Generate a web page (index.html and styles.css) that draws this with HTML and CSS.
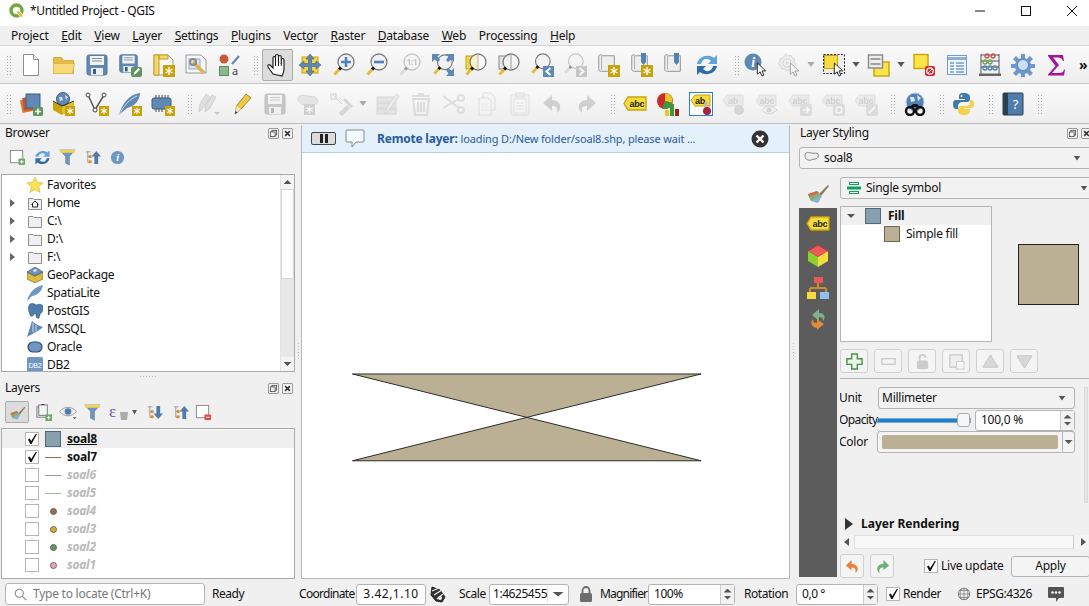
FILE: index.html
```html
<!DOCTYPE html>
<html lang="en">
<head>
	<meta charset="UTF-8">
	<title>*Untitled Project - QGIS</title>
	<link rel="stylesheet" href="styles.css">
</head>
<body>
	<svg class="defs" width="0" height="0">
		<symbol id="star" viewBox="0 0 12 12"><rect width="12" height="12" fill="#c9a20a"/><path d="M6 2v8M2.5 4l7 4M9.500 4l-7 4" stroke="#fff" stroke-width="1.300"/></symbol>
		<symbol id="logo" viewBox="0 0 16 16"><circle cx="7.500" cy="7.500" r="5.500" fill="none" stroke="#6fa83d" stroke-width="3.400"/><path d="M7 7l3 0 5 6-3 2-5-6z" fill="#fff"/><path d="M8.500 8.500l4.500 5" stroke="#f0b429" stroke-width="2.200"/></symbol>
		<symbol id="new" viewBox="0 0 24 24"><path d="M4.500 1.500h10l5 5v16h-15z" fill="#fff" stroke="#8d8d8d"/><path d="M14.500 1.500v5h5" fill="#eee" stroke="#8d8d8d"/></symbol>
		<symbol id="open" viewBox="0 0 24 24"><path d="M1.500 4.500h8l2 3h10v13h-20z" fill="#e8bb4a" stroke="#d9ad3d"/><path d="M1.500 10.500h21l-2 10h-19z" fill="#f8da78" stroke="#e0b84c"/></symbol>
		<symbol id="save" viewBox="0 0 24 24"><rect x="2" y="2" width="20" height="20" rx="2" fill="#5f88b3" stroke="#4f739b"/><rect x="5" y="3" width="14" height="9" fill="#f2f2f2"/><path d="M7 5.500h10M7 8h10" stroke="#8a8a8a"/><rect x="6" y="15" width="12" height="7" fill="#eee"/><rect x="8" y="16" width="3" height="5" fill="#3f5f82"/></symbol>
		<symbol id="saveas" viewBox="0 0 24 24"><use href="#save" width="21" height="21"/><rect x="13" y="14" width="11" height="10" rx="2" fill="#5c9561"/><path d="M15.500 22l1-3 4-4 1.500 1.500-4 4z" fill="#fff"/></symbol>
		<symbol id="layout" viewBox="0 0 24 24"><path d="M3 2h14l5 5v15H3z" fill="#f6f6f6" stroke="#999"/><path d="M3 2h5v20H3zM8 2h9v4H8z" fill="#f2d675" stroke="#c9a20a"/><use href="#star" x="12" y="12" width="12" height="12"/></symbol>
		<symbol id="manager" viewBox="0 0 24 24"><path d="M2 2h15l5 5v13H2z" fill="#f8f8f8" stroke="#999"/><rect x="5" y="6" width="11" height="10" fill="#dbe7f4" stroke="#8ba9c9"/><path d="M9 9l11 11" stroke="#d9b44a" stroke-width="3.500"/><circle cx="9" cy="9" r="3" fill="none" stroke="#8a8a8a" stroke-width="2"/></symbol>
		<symbol id="hand" viewBox="0 0 24 24"><path d="M7 21l-5-7c-1-2 1-3 2-2l3 3V5c0-2 2.500-2 2.500 0v5-7c0-2 3-2 3 0v7-6c0-2 2.800-2 2.800 0v7-4c0-2 2.700-2 2.700 0v9c0 3-1 5-2 7z" fill="#fff" stroke="#222" stroke-width="1.200"/><path d="M9.500 10v3M12.500 10v3M15.300 10v3" stroke="#222"/></symbol>
		<symbol id="pansel" viewBox="0 0 24 24"><rect x="4" y="4" width="16" height="16" fill="#f3d44d" stroke="#c9a20a"/><path d="M12 1l4 5h-2.500v4.500H18V8l5 4-5 4v-2.500h-4.500V18H16l-4 5-4-5h2.500v-4.500H6V16l-5-4 5-4v2.500h4.500V6H8z" fill="#5f88b3" stroke="#3f5f82" stroke-width=".6"/></symbol>
		<symbol id="mag" viewBox="0 0 24 24"><circle cx="14" cy="9" r="8" fill="#f1f1f1" stroke="#7a7a7a" stroke-width="1.300"/><path d="M8.500 15L2.500 21.500" stroke="#e7b93a" stroke-width="3"/><path d="M9 14.500l-1.800 2" stroke="#111" stroke-width="3"/></symbol>
		<symbol id="zin" viewBox="0 0 24 24"><use href="#mag" width="24" height="24"/><path d="M14 4v10M9 9h10" stroke="#4f82b6" stroke-width="2.600"/></symbol>
		<symbol id="zout" viewBox="0 0 24 24"><use href="#mag" width="24" height="24"/><path d="M9 9h10" stroke="#4f82b6" stroke-width="2.600"/></symbol>
		<symbol id="zfull" viewBox="0 0 24 24"><use href="#mag" x="1" y="1" width="22" height="22"/><path d="M1 1h8L6.500 3.500 9 7 7 9 3.500 6.500 1 9zM23 1v8l-2.500-2.500L17 9l-2-2 2.500-3.500L15 1zM23 23h-8l2.500-2.500L15 17l2-2 3.500 2.500L23 15z" fill="#5f88b3"/></symbol>
		<symbol id="zsel" viewBox="0 0 24 24"><rect x="2" y="3" width="12" height="13" fill="#f3d44d" stroke="#c9a20a"/><circle cx="14" cy="9" r="8" fill="#fff" fill-opacity=".7" stroke="#7a7a7a" stroke-width="1.300"/><path d="M14 1v16" stroke="#bbb"/><path d="M8.500 15L2.500 21.500" stroke="#e7b93a" stroke-width="3"/><path d="M9 14.500l-1.800 2" stroke="#111" stroke-width="3"/></symbol>
		<symbol id="zlayer" viewBox="0 0 24 24"><rect x="2" y="3" width="12" height="13" fill="#e6e6e6" stroke="#888"/><circle cx="14" cy="9" r="8" fill="#f4f4f4" fill-opacity=".8" stroke="#7a7a7a" stroke-width="1.300"/><path d="M14 1v16" stroke="#aaa"/><path d="M8.500 15L2.500 21.500" stroke="#e7b93a" stroke-width="3"/><path d="M9 14.500l-1.800 2" stroke="#111" stroke-width="3"/></symbol>
		<symbol id="zlast" viewBox="0 0 24 24"><use href="#mag" width="22" height="22"/><rect x="13" y="13" width="11" height="11" fill="#5f88b3"/><path d="M20.500 15l-4 3.500 4 3.500" fill="none" stroke="#fff" stroke-width="2"/></symbol>
		<symbol id="znext" viewBox="0 0 24 24"><use href="#mag" width="22" height="22"/><rect x="13" y="13" width="11" height="11" fill="#5f88b3"/><path d="M16.500 15l4 3.500-4 3.500" fill="none" stroke="#fff" stroke-width="2"/></symbol>
		<symbol id="map" viewBox="0 0 24 24"><path d="M3 3c2-2 3-1 4 0h13v17H6c-2 0-3-1-3-2z" fill="#eee" stroke="#8d8d8d"/><path d="M6 3v15" stroke="#aaa"/></symbol>
		<symbol id="bmnew" viewBox="0 0 24 24"><use href="#map" width="22" height="22"/><use href="#star" x="12" y="12" width="12" height="12"/></symbol>
		<symbol id="bmpin" viewBox="0 0 24 24"><use href="#map" width="22" height="22"/><path d="M12 0h5v9l-2.500 3-2.500-3z" fill="#4f82b6"/><use href="#star" x="12" y="12" width="12" height="12"/></symbol>
		<symbol id="bm" viewBox="0 0 24 24"><use href="#map" width="22" height="22"/><path d="M12 0h5v9l-2.500 3-2.500-3z" fill="#4f82b6"/></symbol>
		<symbol id="refresh" viewBox="0 0 24 24"><path d="M2 11C3 4 13 0 19 5l3-3v9h-9l3-3C12 4 7 6 6 11z" fill="#5ea3dc"/><path d="M22 13c-1 7-11 11-17 6l-3 3v-9h9l-3 3c4 4 9 2 10-3z" fill="#2e6da8"/></symbol>
		<symbol id="arrow" viewBox="0 0 12 16"><path d="M1 1v12l3-2.500 2 4.500 2-1-2-4.500h4z" fill="#fff" stroke="#222"/></symbol>
		<symbol id="action" viewBox="0 0 24 24"><path d="M9 1l2 2 3-1 1 3 3 1-1 3 2 2-2 3-1 3-3-.5-3 1.500-3-2-3-.5v-3L1 11l2-2-.5-3 3-1z" fill="#ddd" stroke="#aaa"/><circle cx="10" cy="10" r="4" fill="#eee" stroke="#aaa"/><path d="M9 8l3 2-3 2z" fill="#aaa"/><use href="#arrow" x="12" y="9" width="12" height="15"/></symbol>
		<symbol id="select" viewBox="0 0 24 24"><rect x="1.500" y="1.500" width="21" height="19" fill="#ececec" stroke="#222" stroke-dasharray="2 1.500"/><rect x="2.500" y="2.500" width="13" height="13" fill="#f9dc40" stroke="#c9a20a"/><use href="#arrow" x="11" y="9" width="12" height="15"/></symbol>
		<symbol id="attrsel" viewBox="0 0 24 24"><rect x="7" y="9" width="15" height="14" fill="#f9e548" stroke="#c9a20a" stroke-width="1.400"/><rect x="1.500" y="2" width="14" height="13" fill="#eee" stroke="#888" stroke-width="1.400"/><path d="M3.500 6h10M3.500 11h10" stroke="#888" stroke-width="1.400"/></symbol>
		<symbol id="desel" viewBox="0 0 24 24"><rect x="2" y="1.500" width="14" height="14" fill="#f9e548" stroke="#c9a20a" stroke-width="1.400"/><rect x="13" y="13" width="10" height="10" rx="2" fill="#d8262c"/><circle cx="18" cy="18" r="3.200" fill="none" stroke="#fff" stroke-width="1.200"/><path d="M16 20l4-4" stroke="#fff"/></symbol>
		<symbol id="table" viewBox="0 0 24 24"><rect x="2.500" y="2.500" width="19" height="19" fill="#f2f7fc" stroke="#6f9ccc"/><path d="M3 4h18v3H3z" fill="#8db1d6"/><path d="M5 10h4M11 10h8M5 13h4M11 13h8M5 16h4M11 16h8M5 19h4M11 19h8" stroke="#6f9ccc" stroke-width="1.300"/></symbol>
		<symbol id="abacus" viewBox="0 0 24 24"><path d="M3 1v20M21 1v20M3 2h18M3 8h18M3 14h18" stroke="#555" fill="none"/><rect x="1" y="20.500" width="22" height="2.500" fill="#666"/><g fill="none" stroke="#c0504d" stroke-width="1.300"><circle cx="9" cy="3" r="2"/><circle cx="15" cy="3" r="2"/></g><g fill="none" stroke="#6ea84f" stroke-width="1.300"><circle cx="7" cy="9" r="2"/><circle cx="12" cy="9" r="2"/></g><g fill="none" stroke="#4f82b6" stroke-width="1.300"><circle cx="7" cy="15" r="2"/><circle cx="12" cy="15" r="2"/><circle cx="17" cy="15" r="2"/></g></symbol>
		<symbol id="gear" viewBox="0 0 24 24"><path d="M10 1h4v4l2 1 3-3 3 3-3 3 1 2h4v4h-4l-1 2 3 3-3 3-3-3-2 1v4h-4v-4l-2-1-3 3-3-3 3-3-1-2H0v-4h4l1-2-3-3 3-3 3 3 2-1z" fill="#6d97cc"/><circle cx="12" cy="12" r="5.500" fill="#cfdff2" stroke="#5b86bb"/></symbol>
		<symbol id="sigma" viewBox="0 0 24 24"><path d="M4 2h15l1 6h-1c-1-3-3-3.500-5-3.500H9l6 7.500-7 8h7c3 0 4.500-1 5-3.500h1l-1 6H4v-1l7.500-8.500L4 3z" fill="#a3159a"/></symbol>
		<symbol id="dsm" viewBox="0 0 24 24"><rect x="2" y="7" width="13" height="13" fill="#d97a2b" transform="rotate(-12 8 13)"/><rect x="4" y="5" width="13" height="13" fill="#c7503f" transform="rotate(-8 10 11)"/><rect x="7" y="2" width="14" height="14" fill="#5f88b3" stroke="#3f5f82"/><rect x="14" y="15" width="10" height="9" rx="1.500" fill="#5c9561"/><path d="M19 16.500v6M16 19.500h6" stroke="#fff" stroke-width="1.600"/></symbol>
		<symbol id="gpkg" viewBox="0 0 24 24"><path d="M1 9l9 5v9l-9-5z" fill="#c9a20a"/><path d="M22 9l-12 5v9l12-5z" fill="#e0c12a"/><circle cx="11" cy="7" r="6.500" fill="#5f88b3" stroke="#3f5f82"/><path d="M7 5h3l1 3-3 1zM13 3l3 2-2 3z" fill="#cfdff2"/><path d="M1 9l9 5 12-5" fill="none" stroke="#333"/><use href="#star" x="13" y="14" width="10" height="10"/></symbol>
		<symbol id="vertex" viewBox="0 0 24 24"><path d="M3 3l7 15 9-15" fill="none" stroke="#555" stroke-width="1.500"/><circle cx="3" cy="3" r="2" fill="#fff" stroke="#444"/><circle cx="19" cy="3" r="2" fill="#fff" stroke="#444"/><circle cx="10" cy="18" r="2" fill="#fff" stroke="#444"/><use href="#star" x="14" y="14" width="10" height="10"/></symbol>
		<symbol id="feather" viewBox="0 0 24 24"><path d="M1 23C4 12 10 3 22 1c0 6-4 13-13 15z" fill="#5f88b3"/><path d="M1 23C6 13 12 7 19 4" fill="none" stroke="#cfdff2"/><use href="#star" x="14" y="14" width="10" height="10"/></symbol>
		<symbol id="chip" viewBox="0 0 24 24"><rect x="1" y="6" width="19" height="11" rx="2" fill="#5f88b3" stroke="#3f5f82"/><path d="M5 3v3M8 3v3M11 3v3M14 3v3M17 3v3M5 17v3M8 17v3M11 17v3" stroke="#444"/><use href="#star" x="14" y="14" width="10" height="10"/></symbol>
		<symbol id="pencils" viewBox="0 0 24 24"><path d="M2 20l1-8 6-10 4 3-6 10zM8 20l1-7 6-10 4 2-6 11z" fill="#bbb" stroke="#999"/><path d="M17 20h6l-3 3z" fill="#888"/></symbol>
		<symbol id="pencil" viewBox="0 0 24 24"><path d="M5 22l1.500-8L16 2l5 4-10 11z" fill="#eec84a" stroke="#a98a22"/><path d="M5 22l1.500-8 4.500 3z" fill="#f3e3c2"/><path d="M5 22l.5-3 2 1.500z" fill="#333"/></symbol>
		<symbol id="digit" viewBox="0 0 24 24"><path d="M4 3l9 9" stroke="#999" fill="none"/><rect x="2" y="2" width="5" height="5" fill="none" stroke="#999"/><path d="M10 21l8-8 3 3-8 8z" fill="#aaa"/><path d="M15 7l8 8" stroke="#aaa" stroke-width="3"/></symbol>
		<symbol id="blob" viewBox="0 0 24 24"><path d="M2 6c2-4 7-3 10-2s7-1 9 3-1 5-4 6-6 1-9 0-7-3-6-7z" fill="#ccc" stroke="#aaa"/></symbol>
		<symbol id="blobstar" viewBox="0 0 24 24"><use href="#blob" width="24" height="24"/><use href="#star" x="8" y="12" width="11" height="11"/></symbol>
		<symbol id="editattr" viewBox="0 0 24 24"><rect x="1" y="5" width="19" height="5" fill="#ccc" stroke="#aaa"/><rect x="1" y="11" width="19" height="5" fill="#ccc" stroke="#aaa"/><rect x="1" y="17" width="19" height="5" fill="#ccc" stroke="#aaa"/><path d="M9 22l2-7 9-13 3 2-9 13z" fill="#ddd" stroke="#aaa"/></symbol>
		<symbol id="trash" viewBox="0 0 24 24"><path d="M4 7h16l-2 16H6z" fill="none" stroke="#c4b4b4" stroke-width="2"/><path d="M3 4h18M9 2h6M9 10v10M12 10v10M15 10v10" stroke="#c4b4b4" stroke-width="2"/></symbol>
		<symbol id="cut" viewBox="0 0 24 24"><path d="M1 4l16 12M1 16L17 7" stroke="#bbb" stroke-width="2"/><circle cx="19" cy="18" r="3" fill="none" stroke="#bbb" stroke-width="2"/><circle cx="19" cy="6" r="3" fill="none" stroke="#bbb" stroke-width="2"/></symbol>
		<symbol id="copy" viewBox="0 0 24 24"><path d="M8 1h8l4 4v13H8z" fill="#f2f2f2" stroke="#bbb"/><path d="M4 6h9l3 3v14H4z" fill="#f7f7f7" stroke="#bbb"/><path d="M6 12h8M6 15h8M6 18h8" stroke="#ccc"/></symbol>
		<symbol id="paste" viewBox="0 0 24 24"><rect x="3" y="3" width="18" height="20" rx="1" fill="#eee" stroke="#bbb"/><rect x="8" y="1" width="8" height="4" fill="#ddd" stroke="#bbb"/><rect x="6" y="7" width="12" height="14" fill="#f8f8f8" stroke="#ccc"/><path d="M8 11h8M8 14h8M8 17h8" stroke="#ccc"/></symbol>
		<symbol id="undo" viewBox="0 0 24 24"><path d="M11 3L2 11l9 8v-5c4 0 6 1 5 7 5-4 5-12-5-13z" fill="#999"/></symbol>
		<symbol id="redo" viewBox="0 0 24 24"><path d="M13 3l9 8-9 8v-5c-4 0-6 1-5 7-5-4-5-12 5-13z" fill="#999"/></symbol>
		<symbol id="diagram" viewBox="0 0 24 24"><circle cx="9" cy="9" r="8" fill="#cc2b2b"/><path d="M9 9V1a8 8 0 0 1 7.500 10z" fill="#e8c52a"/><path d="M9 9l7.500 2A8 8 0 0 1 6 16.500z" fill="#3a9a3a"/><rect x="9" y="18" width="4" height="6" fill="#e8c52a"/><rect x="14" y="12" width="4" height="12" fill="#3a9a3a"/><rect x="19" y="17" width="4" height="7" fill="#a02020"/></symbol>
		<symbol id="search" viewBox="0 0 24 24"><circle cx="12" cy="10" r="9" fill="#4f82b6" stroke="#bcd"/><path d="M7 5h4l1 4-4 1zM14 3l4 3-3 3z" fill="#dfe9f4"/><circle cx="7" cy="19" r="4" fill="none" stroke="#111" stroke-width="2.500"/><circle cx="17" cy="19" r="4" fill="none" stroke="#111" stroke-width="2.500"/><path d="M7 15l3-3h4l3 3" fill="#111"/></symbol>
		<symbol id="python" viewBox="0 0 24 24"><path d="M12 1C7 1 7 3 7 5v2h6v1H4c-3 0-3 3-3 5s1 4 3 4h2v-3c0-2 2-4 4-4h5c2 0 3-1 3-3V5c0-2-2-4-6-4z" fill="#3f7cad"/><circle cx="9.500" cy="4" r="1" fill="#fff"/><path d="M18 8v3c0 2-2 3-4 3H9c-2 0-3 1-3 3v2c0 2 2 4 6 4s6-2 6-4v-2h-6v-1h7c3 0 3-3 3-5s-1-3-3-3z" fill="#f5d04c"/></symbol>
		<symbol id="undock" viewBox="0 0 14 14"><rect x=".5" y=".5" width="13" height="13" rx="2" fill="#f4f4f4" stroke="#777"/><rect x="5" y="3" width="6" height="6" fill="none" stroke="#444"/><rect x="3" y="5" width="6" height="6" fill="#f4f4f4" stroke="#444"/></symbol>
		<symbol id="close" viewBox="0 0 14 14"><rect x=".5" y=".5" width="13" height="13" rx="2" fill="#f4f4f4" stroke="#777"/><path d="M4 4l6 6M10 4l-6 6" stroke="#333" stroke-width="2"/></symbol>
		<symbol id="addgroup" viewBox="0 0 18 18"><rect x="1.500" y="1.500" width="13" height="13" fill="#fff" stroke="#888"/><rect x="10" y="10" width="7" height="7" rx="1" fill="#6fa868"/><path d="M13.500 11.500v4M11.500 13.500h4" stroke="#fff"/></symbol>
		<symbol id="funnel" viewBox="0 0 18 18"><path d="M1 1h16l-6 7v9l-4-2V8z" fill="#6f97c2" stroke="#4f739b" stroke-width=".6"/><rect x="1" y="1" width="16" height="3" fill="#f3d44d"/></symbol>
		<symbol id="expand" viewBox="0 0 18 18"><path d="M2 3h5M4 3v11h3M4 8h3" fill="none" stroke="#999"/><rect x="5" y="6.500" width="3" height="3" fill="#e08a2b"/><rect x="5" y="12" width="3" height="3" fill="#e08a2b"/><path d="M13 2l5 6h-3v8h-4V8H8z" fill="#4f7cab"/></symbol>
		<symbol id="collapse" viewBox="0 0 18 18"><path d="M2 3h5M4 3v11h3M4 8h3" fill="none" stroke="#999"/><rect x="5" y="6.500" width="3" height="3" fill="#e08a2b"/><rect x="5" y="12" width="3" height="3" fill="#e08a2b"/><path d="M13 16l5-6h-3V2h-4v8H8z" fill="#4f7cab"/></symbol>
		<symbol id="brush" viewBox="0 0 24 24"><path d="M13 13l9-9 1 1-8 10z" fill="#8a7a55"/><path d="M2 13l9-3 5 5-4 7-7-2z" fill="#8cb0c9"/><path d="M2 13l9-3 2 2-10 4z" fill="#d9664a"/><path d="M3 16l10-4 1 2-9 6z" fill="#7fb36f"/></symbol>
		<symbol id="addlayer" viewBox="0 0 18 18"><rect x="2" y="3" width="10" height="11" fill="#eee" stroke="#777"/><rect x="4" y="1" width="9" height="11" fill="#f4f4f4" stroke="#777"/><path d="M7 1V0h3v1" stroke="#777"/><rect x="11" y="11" width="7" height="7" fill="#6fa868"/><path d="M14.500 12.500v4M12.500 14.500h4" stroke="#fff"/></symbol>
		<symbol id="eye" viewBox="0 0 20 18"><path d="M1 8c5-6 13-6 18 0-5 6-13 6-18 0z" fill="#eee" stroke="#999"/><circle cx="10" cy="8" r="3.500" fill="#4f7cab"/><path d="M15 14h4l-2 2z" fill="#444"/></symbol>
		<symbol id="bin" viewBox="0 0 10 10"><path d="M1 2h8L8 10H2z" fill="#aaa"/></symbol>
		<symbol id="remove" viewBox="0 0 18 18"><rect x="1.500" y="1.500" width="13" height="13" fill="#fff" stroke="#888"/><rect x="10" y="11" width="7" height="6" rx="1" fill="#e2474a"/><path d="M11.500 14h4" stroke="#fff"/></symbol>
		<symbol id="folder" viewBox="0 0 16 16"><path d="M1.500 3.500v11h13v-10H7l-1-1z" fill="#f0f0f0" stroke="#8d8d8d"/></symbol>
		<symbol id="home" viewBox="0 0 16 16"><use href="#folder" width="16" height="16"/><path d="M4.500 9.500L8 6l3.500 3.500M5.500 9v3h5V9" fill="#fff" stroke="#222"/></symbol>
		<symbol id="favstar" viewBox="0 0 16 16"><path d="M8 0l2.300 5.400 5.700.5-4.300 3.800 1.300 5.800L8 12.400l-5 3.100 1.300-5.800L0 5.900l5.700-.5z" fill="#f9e354" stroke="#d8b83a" stroke-width=".7"/></symbol>
		<symbol id="gpkgsm" viewBox="0 0 16 16"><path d="M0 5l8 4 8-4v7l-8 4-8-4z" fill="#dcbc3c" stroke="#555" stroke-width=".6"/><path d="M0 5l8-5 8 5-8 4z" fill="#7094bd" stroke="#444" stroke-width=".6"/><path d="M6 3l3-1 1 2-3 1z" fill="#dfe9f4"/></symbol>
		<symbol id="feathersm" viewBox="0 0 16 16"><path d="M0 16C2 8 7 2 16 0c-1 5-4 10-11 11z" fill="#6f97c2"/></symbol>
		<symbol id="pg" viewBox="0 0 16 16"><path d="M3 1c3-1 5 0 6 1 2-1 6-1 7 1s0 6-3 8c0 3-1 5-3 4-1 0-1-3-1-4H7c-1 3-3 3-4 1-1-3-3-8 0-11z" fill="#4f7cab" stroke="#2c4f73" stroke-width=".5"/></symbol>
		<symbol id="mssql" viewBox="0 0 16 16"><path d="M0 16L5 0c3 3 7 5 11 6-3 3-9 6-16 10z" fill="#5f88b3"/><path d="M6 2v9M9 4v6" stroke="#cfdff2"/></symbol>
		<symbol id="oracle" viewBox="0 0 16 16"><rect x="1" y="3" width="14" height="10" rx="5" fill="#6f97c2" stroke="#2c4f73" stroke-width="1.200"/></symbol>
		<symbol id="bubble" viewBox="0 0 20 20"><path d="M2 1h16a1 1 0 0 1 1 1v10a1 1 0 0 1-1 1h-7l-4 5v-5H2a1 1 0 0 1-1-1V2a1 1 0 0 1 1-1z" fill="#f4f9fd" stroke="#888"/></symbol>
		<symbol id="xcircle" viewBox="0 0 18 18"><circle cx="9" cy="9" r="8.500" fill="#333"/><path d="M5.500 5.500l7 7M12.500 5.500l-7 7" stroke="#fff" stroke-width="2.400"/></symbol>
		<symbol id="polygon" viewBox="0 0 16 16"><path d="M1 5c0-3 3-3 6-2s6-1 7 1 0 5-3 5-4 2-7 1-3-3-3-5z" fill="#eee" stroke="#888"/></symbol>
		<symbol id="single" viewBox="0 0 14 14"><path d="M2 1h10v3H2zM0 5.500h14v3H0zM2 10h10v3H2z" fill="#0f9d58"/><path d="M3 2.500h8M3 11.500h8" stroke="#fff"/></symbol>
		<symbol id="cube" viewBox="0 0 24 24"><path d="M12 1l10 6-10 6L2 7z" fill="#ee5a5a" stroke="#b33"/><path d="M2 7l10 6v10L2 17z" fill="#8ccf2e"/><path d="M22 7l-10 6v10l10-6z" fill="#f6dc3c"/></symbol>
		<symbol id="tree" viewBox="0 0 24 24"><rect x="8" y="1" width="9" height="6" fill="#e85a5a"/><path d="M12 7v5M4 12h16M4 12v4M20 12v4" stroke="#d08a2b" stroke-width="2" fill="none"/><rect x="1" y="16" width="9" height="7" fill="#f6dc3c"/><rect x="14" y="16" width="9" height="7" fill="#8fc0ef"/></symbol>
		<symbol id="hist" viewBox="0 0 24 24"><path d="M13 1l-7 6 7 6V9c3 0 4 1 4 4 3-3 2-8-4-8z" fill="#7fb08a"/><path d="M11 22l7-6-7-5v4c-3 0-4-1-4-4-3 3-2 8 4 9z" fill="#e08a3c"/></symbol>
		<symbol id="plus" viewBox="0 0 18 18"><path d="M6 1h6v5h5v6h-5v5H6v-5H1V6h5z" fill="#e9f5e6" stroke="#4f8f4f" stroke-width="1.500"/></symbol>
		<symbol id="minus" viewBox="0 0 18 18"><rect x="2" y="6" width="14" height="6" fill="#f4f4f4" stroke="#ccc" stroke-width="1.500"/></symbol>
		<symbol id="lock" viewBox="0 0 18 18"><rect x="3" y="8" width="12" height="9" rx="2" fill="#ccc"/><path d="M6 8V5a3 3 0 0 1 6 0" fill="none" stroke="#ccc" stroke-width="2"/></symbol>
		<symbol id="dup" viewBox="0 0 18 18"><rect x="2" y="2" width="13" height="13" fill="#eee" stroke="#bbb"/><rect x="9" y="9" width="8" height="8" fill="#f8f8f8" stroke="#ccc"/></symbol>
		<symbol id="up" viewBox="0 0 18 18"><path d="M9 2l8 13H1z" fill="#d8d8d8" stroke="#c4c4c4"/></symbol>
		<symbol id="down" viewBox="0 0 18 18"><path d="M9 16L1 3h16z" fill="#d8d8d8" stroke="#c4c4c4"/></symbol>
		<symbol id="undoc" viewBox="0 0 18 18"><path d="M8 2L2 8l6 5V10c3 0 5 1 4 6 4-3 4-9-4-10z" fill="#e8813a"/></symbol>
		<symbol id="redoc" viewBox="0 0 18 18"><path d="M10 2l6 6-6 5V10c-3 0-5 1-4 6-4-3-4-9 4-10z" fill="#6fb07a"/></symbol>
		<symbol id="mouse" viewBox="0 0 18 18"><path d="M3 2l8 3 5 7-3 5-6-1-5-6z" fill="#333" stroke="#222"/><path d="M3 6l7-3M5 10l8-5M8 14l6-5" stroke="#eee" stroke-width="1.200"/><circle cx="11" cy="13" r="2" fill="#eee"/></symbol>
		<symbol id="padlock" viewBox="0 0 14 16"><rect x="1" y="7" width="12" height="9" rx="1.500" fill="#6c6c6c"/><path d="M3.500 7V4.500a3.500 3.500 0 0 1 7 0V7" fill="none" stroke="#6c6c6c" stroke-width="1.800"/></symbol>
		<symbol id="globe" viewBox="0 0 16 16"><circle cx="8" cy="8" r="6.500" fill="#eee" stroke="#666"/><path d="M1.500 8h13M8 1.500v13M3 4h10M3 12h10M5 2c-2 4-2 8 0 12M11 2c2 4 2 8 0 12" fill="none" stroke="#666" stroke-width=".7"/></symbol>
		<symbol id="msg" viewBox="0 0 18 18"><path d="M2 2h14a1 1 0 0 1 1 1v9a1 1 0 0 1-1 1h-4l-3 4v-4H2a1 1 0 0 1-1-1V3a1 1 0 0 1 1-1z" fill="#555"/><circle cx="5.500" cy="7.500" r="1.200" fill="#fff"/><circle cx="9" cy="7.500" r="1.200" fill="#fff"/><circle cx="12.500" cy="7.500" r="1.200" fill="#fff"/></symbol>
		<symbol id="glass" viewBox="0 0 16 16"><circle cx="6.500" cy="6.500" r="5" fill="none" stroke="#888" stroke-width="1.300"/><path d="M10 10l5 5" stroke="#888" stroke-width="1.500"/></symbol>
	</svg>

	<div class="app">
		<header class="titlebar">
			<svg class="app-logo"><use href="#logo"/></svg>
			<span class="app-title">*Untitled Project - QGIS</span>
			<div class="winbtns">
				<svg class="winbtn" viewBox="0 0 12 12"><path d="M1 6h10" stroke="#111"/></svg>
				<svg class="winbtn" viewBox="0 0 12 12"><rect x="1.500" y="1.500" width="9" height="9" fill="none" stroke="#111"/></svg>
				<svg class="winbtn" viewBox="0 0 12 12"><path d="M1 1l10 10M11 1L1 11" stroke="#111"/></svg>
			</div>
		</header>

		<nav class="menubar">
			<span>Pro<u>j</u>ect</span>
			<span><u>E</u>dit</span>
			<span><u>V</u>iew</span>
			<span><u>L</u>ayer</span>
			<span><u>S</u>ettings</span>
			<span><u>P</u>lugins</span>
			<span>Vect<u>o</u>r</span>
			<span><u>R</u>aster</span>
			<span><u>D</u>atabase</span>
			<span><u>W</u>eb</span>
			<span>Pro<u>c</u>essing</span>
			<span><u>H</u>elp</span>
		</nav>

		<div class="toolbar">
			<i class="grip first"></i>
			<span class="tool"><svg class="ic"><use href="#new"/></svg></span>
			<span class="tool"><svg class="ic"><use href="#open"/></svg></span>
			<span class="tool"><svg class="ic"><use href="#save"/></svg></span>
			<span class="tool"><svg class="ic"><use href="#saveas"/></svg></span>
			<span class="tool"><svg class="ic"><use href="#layout"/></svg></span>
			<span class="tool"><svg class="ic"><use href="#manager"/></svg></span>
			<span class="tool">
				<svg class="ic" viewBox="0 0 24 24"><circle cx="7" cy="6" r="4.500" fill="#c75b39"/><path d="M15 11l7-8" stroke="#5f88b3" stroke-width="2"/><rect x="2.500" y="13.500" width="9" height="9" fill="#8cb78f" stroke="#5c8f60"/><text x="15" y="22" font-family="Noto Sans" font-size="11" fill="#444">a</text></svg>
			</span>
			<i class="grip pan"></i>
			<span class="tool active"><svg class="ic"><use href="#hand"/></svg></span>
			<span class="tool"><svg class="ic"><use href="#pansel"/></svg></span>
			<span class="tool nudge-sm"><svg class="ic"><use href="#zin"/></svg></span>
			<span class="tool"><svg class="ic"><use href="#zout"/></svg></span>
			<span class="tool off">
				<svg class="ic" viewBox="0 0 24 24"><use href="#mag" width="24" height="24"/><text x="14" y="12" text-anchor="middle" font-family="Noto Sans" font-weight="700" font-size="8" fill="#777">1:1</text></svg>
			</span>
			<span class="tool"><svg class="ic"><use href="#zfull"/></svg></span>
			<span class="tool"><svg class="ic"><use href="#zsel"/></svg></span>
			<span class="tool"><svg class="ic"><use href="#zlayer"/></svg></span>
			<span class="tool"><svg class="ic"><use href="#zlast"/></svg></span>
			<span class="tool off"><svg class="ic"><use href="#znext"/></svg></span>
			<span class="tool"><svg class="ic"><use href="#bmnew"/></svg></span>
			<span class="tool"><svg class="ic"><use href="#bmpin"/></svg></span>
			<span class="tool"><svg class="ic"><use href="#bm"/></svg></span>
			<span class="tool"><svg class="ic"><use href="#refresh"/></svg></span>
			<i class="grip wide"></i>
			<span class="tool">
				<svg class="ic" viewBox="0 0 24 24"><circle cx="9" cy="9" r="8.500" fill="#5f88b3"/><text x="9" y="14" text-anchor="middle" font-family="Liberation Serif" font-style="italic" font-weight="700" font-size="14" fill="#fff">i</text><use href="#arrow" x="12" y="9" width="12" height="15"/></svg>
			</span>
			<span class="tool off"><svg class="ic"><use href="#action"/></svg></span>
			<i class="drop off"></i>
			<span class="tool"><svg class="ic"><use href="#select"/></svg></span>
			<i class="drop"></i>
			<span class="tool"><svg class="ic"><use href="#attrsel"/></svg></span>
			<i class="drop"></i>
			<span class="tool"><svg class="ic"><use href="#desel"/></svg></span>
			<span class="tool"><svg class="ic"><use href="#table"/></svg></span>
			<span class="tool"><svg class="ic"><use href="#abacus"/></svg></span>
			<span class="tool"><svg class="ic"><use href="#gear"/></svg></span>
			<span class="tool"><svg class="ic"><use href="#sigma"/></svg></span>
			<span class="more">&raquo;</span>
		</div>

		<div class="toolbar second">
			<i class="grip first"></i>
			<span class="tool"><svg class="ic"><use href="#dsm"/></svg></span>
			<span class="tool"><svg class="ic"><use href="#gpkg"/></svg></span>
			<span class="tool"><svg class="ic"><use href="#vertex"/></svg></span>
			<span class="tool"><svg class="ic"><use href="#feather"/></svg></span>
			<span class="tool"><svg class="ic"><use href="#chip"/></svg></span>
			<i class="grip tight"></i>
			<span class="tool off"><svg class="ic"><use href="#pencils"/></svg></span>
			<span class="tool"><svg class="ic"><use href="#pencil"/></svg></span>
			<span class="tool off"><svg class="ic"><use href="#save"/></svg></span>
			<span class="tool off"><svg class="ic"><use href="#blobstar"/></svg></span>
			<span class="tool off"><svg class="ic"><use href="#digit"/></svg></span>
			<i class="drop off"></i>
			<span class="tool off nudge"><svg class="ic"><use href="#editattr"/></svg></span>
			<span class="tool off"><svg class="ic"><use href="#trash"/></svg></span>
			<span class="tool off"><svg class="ic"><use href="#cut"/></svg></span>
			<span class="tool off"><svg class="ic"><use href="#copy"/></svg></span>
			<span class="tool off"><svg class="ic"><use href="#paste"/></svg></span>
			<span class="tool off"><svg class="ic"><use href="#undo"/></svg></span>
			<span class="tool off"><svg class="ic"><use href="#redo"/></svg></span>
			<i class="grip"></i>
			<span class="tool">
				<svg class="ic" viewBox="0 0 24 24"><path d="M5 5h18v13H5l-4-6.500z" fill="#f6dc3c" stroke="#c9a20a" stroke-width="1.300"/><text x="14" y="15" text-anchor="middle" font-family="Liberation Sans" font-weight="700" font-size="9" fill="#222">abc</text></svg>
			</span>
			<span class="tool"><svg class="ic"><use href="#diagram"/></svg></span>
			<span class="tool">
				<svg class="ic" viewBox="0 0 24 24"><rect x=".5" y=".5" width="23" height="23" fill="#fff" stroke="#2f7ed8"/><path d="M6 3h15v11H6L2 8.500z" fill="#f6dc3c" stroke="#c9a20a"/><text x="11" y="12" text-anchor="middle" font-family="Liberation Sans" font-weight="700" font-size="9" fill="#222">ab</text><path d="M17 10v7" stroke="#bbb" stroke-width="3"/><circle cx="18" cy="19" r="4" fill="#a8243a"/></svg>
			</span>
			<span class="tool off">
				<svg class="ic" viewBox="0 0 24 24"><path d="M5 3h16v11H5l-4-5.500z" fill="#d8d8d8" stroke="#bbb"/><text x="11" y="12" text-anchor="middle" font-family="Liberation Sans" font-weight="700" font-size="9" fill="#999">ab</text><circle cx="17" cy="18" r="5" fill="#aaa"/></svg>
			</span>
			<span class="tool off">
				<svg class="ic" viewBox="0 0 24 24"><path d="M5 3h16v11H5l-4-5.500z" fill="#d8d8d8" stroke="#bbb"/><text x="12" y="12" text-anchor="middle" font-family="Liberation Sans" font-weight="700" font-size="9" fill="#999">abc</text><path d="M7 18c4-5 10-5 15 0-5 5-11 5-15 0z" fill="#eee" stroke="#aaa"/><circle cx="14" cy="18" r="2.500" fill="#aaa"/></svg>
			</span>
			<span class="tool off">
				<svg class="ic" viewBox="0 0 24 24"><path d="M5 3h16v11H5l-4-5.500z" fill="#d8d8d8" stroke="#bbb"/><text x="12" y="12" text-anchor="middle" font-family="Liberation Sans" font-weight="700" font-size="9" fill="#999">abc</text><rect x="12" y="12" width="12" height="12" rx="2" fill="#bbb"/><path d="M15 18h6M18 15l3 3-3 3" fill="none" stroke="#fff" stroke-width="1.600"/></svg>
			</span>
			<span class="tool off">
				<svg class="ic" viewBox="0 0 24 24"><path d="M5 3h16v11H5l-4-5.500z" fill="#d8d8d8" stroke="#bbb"/><text x="12" y="12" text-anchor="middle" font-family="Liberation Sans" font-weight="700" font-size="9" fill="#999">abc</text><rect x="12" y="12" width="12" height="12" rx="2" fill="#bbb"/><circle cx="18" cy="18" r="3" fill="none" stroke="#fff" stroke-width="1.500"/></svg>
			</span>
			<span class="tool off">
				<svg class="ic" viewBox="0 0 24 24"><path d="M5 3h16v11H5l-4-5.500z" fill="#d8d8d8" stroke="#bbb"/><text x="12" y="12" text-anchor="middle" font-family="Liberation Sans" font-weight="700" font-size="9" fill="#999">abc</text><rect x="12" y="12" width="12" height="12" rx="2" fill="#bbb"/><path d="M15 21l6-6" stroke="#fff" stroke-width="1.800"/></svg>
			</span>
			<i class="grip"></i>
			<span class="tool"><svg class="ic"><use href="#search"/></svg></span>
			<i class="grip"></i>
			<span class="tool"><svg class="ic"><use href="#python"/></svg></span>
			<i class="grip"></i>
			<span class="tool">
				<svg class="ic" viewBox="0 0 24 24"><rect x="2" y="1" width="20" height="22" rx="1" fill="#4f7cab" stroke="#2c3e50"/><rect x="2" y="1" width="5" height="22" fill="#2c3e50"/><text x="14.500" y="17" text-anchor="middle" font-family="Noto Sans" font-size="13" fill="#fff">?</text></svg>
			</span>
			<i class="grip"></i>
		</div>

		<main class="workspace">
			<aside class="dock left">
				<div class="dock-title">
					<span>Browser</span>
					<div class="dock-btns"><svg><use href="#undock"/></svg><svg><use href="#close"/></svg></div>
				</div>
				<div class="panel-tools">
					<svg><use href="#addgroup"/></svg>
					<svg><use href="#refresh"/></svg>
					<svg><use href="#funnel"/></svg>
					<svg><use href="#expand"/></svg>
					<svg viewBox="0 0 18 18"><circle cx="9" cy="9" r="7" fill="#6f97c2"/><text x="9" y="13" text-anchor="middle" font-family="Liberation Serif" font-style="italic" font-weight="700" font-size="11" fill="#fff">i</text></svg>
				</div>
				<div class="listbox browser">
					<ul class="tree">
						<li><i class="twisty"></i><svg><use href="#favstar"/></svg>Favorites</li>
						<li><i class="twisty shut"></i><svg><use href="#home"/></svg>Home</li>
						<li><i class="twisty shut"></i><svg><use href="#folder"/></svg>C:\</li>
						<li><i class="twisty shut"></i><svg><use href="#folder"/></svg>D:\</li>
						<li><i class="twisty shut"></i><svg><use href="#folder"/></svg>F:\</li>
						<li><i class="twisty"></i><svg><use href="#gpkgsm"/></svg>GeoPackage</li>
						<li><i class="twisty"></i><svg><use href="#feathersm"/></svg>SpatiaLite</li>
						<li><i class="twisty"></i><svg><use href="#pg"/></svg>PostGIS</li>
						<li><i class="twisty"></i><svg><use href="#mssql"/></svg>MSSQL</li>
						<li><i class="twisty"></i><svg><use href="#oracle"/></svg>Oracle</li>
						<li><i class="twisty"></i><svg viewBox="0 0 16 16"><rect width="16" height="16" rx="2" fill="#6f97c2"/><text x="8" y="11" text-anchor="middle" font-family="Liberation Sans" font-size="7" fill="#fff">DB2</text></svg>DB2</li>
					</ul>
					<div class="vscroll">
						<span class="sb-btn"><i class="tri-up"></i></span>
						<span class="sb-thumb"></span>
						<span class="sb-track"></span>
						<span class="sb-btn"><i class="tri-down"></i></span>
					</div>
				</div>
				<div class="h-split"><i></i></div>
				<div class="dock-title short">
					<span>Layers</span>
					<div class="dock-btns"><svg><use href="#undock"/></svg><svg><use href="#close"/></svg></div>
				</div>
				<div class="panel-tools layers-tools">
					<span class="pressed"><svg><use href="#brush"/></svg></span>
					<svg><use href="#addlayer"/></svg>
					<svg class="wider"><use href="#eye"/></svg>
					<svg><use href="#funnel"/></svg>
					<span class="eps">&#949;</span>
					<svg class="eps-bin"><use href="#bin"/></svg>
					<i class="drop small"></i>
					<svg class="gap-left"><use href="#collapse"/></svg>
					<svg class="gap-left wide-gap"><use href="#expand"/></svg>
					<svg><use href="#remove"/></svg>
				</div>
				<ul class="listbox layers">
					<li class="current"><i class="check on"></i><span class="sym swatch"></span><b class="name"><u>soal8</u></b></li>
					<li><i class="check on"></i><span class="sym"><i class="line brown"></i></span><b class="name">soal7</b></li>
					<li class="hidden-layer"><i class="check"></i><span class="sym"><i class="line grey"></i></span><b class="name">soal6</b></li>
					<li class="hidden-layer"><i class="check"></i><span class="sym"><i class="line green"></i></span><b class="name">soal5</b></li>
					<li class="hidden-layer"><i class="check"></i><span class="sym"><i class="dot c4"></i></span><b class="name">soal4</b></li>
					<li class="hidden-layer"><i class="check"></i><span class="sym"><i class="dot c3"></i></span><b class="name">soal3</b></li>
					<li class="hidden-layer"><i class="check"></i><span class="sym"><i class="dot c2"></i></span><b class="name">soal2</b></li>
					<li class="hidden-layer"><i class="check"></i><span class="sym"><i class="dot c1"></i></span><b class="name">soal1</b></li>
				</ul>
			</aside>

			<div class="v-split"><i></i></div>

			<section class="canvas-area">
				<div class="msgbar">
					<span class="pause"><i></i><i></i></span>
					<svg class="msg-bubble"><use href="#bubble"/></svg>
					<span class="msg-text"><b>Remote layer:</b> <span class="msg-detail">loading D:/New folder/soal8.shp, please wait ...</span></span>
					<svg class="msg-close"><use href="#xcircle"/></svg>
				</div>
				<svg class="canvas" viewBox="0 0 487 426">
					<path d="M50 221.500H399.500L50 308.500H399.500z" fill="#bcb094" stroke="#2b2b2b"/>
				</svg>
			</section>

			<div class="v-split"><i></i></div>

			<aside class="dock right">
				<div class="dock-title styling">
					<span>Layer Styling</span>
					<div class="dock-btns"><svg><use href="#undock"/></svg><svg><use href="#close"/></svg></div>
				</div>
				<div class="combo layer-combo"><svg><use href="#polygon"/></svg>soal8<i class="drop"></i></div>
				<div class="style-body">
					<div class="style-tabs">
						<span class="tab current"><svg><use href="#brush"/></svg></span>
						<div class="tab-rail">
							<span class="tab">
								<svg viewBox="0 0 24 24"><path d="M5 5h18v13H5l-4-6.500z" fill="#f6dc3c" stroke="#c9a20a" stroke-width="1.300"/><text x="14" y="15" text-anchor="middle" font-family="Liberation Sans" font-weight="700" font-size="9" fill="#222">abc</text></svg>
							</span>
							<span class="tab"><svg><use href="#cube"/></svg></span>
							<span class="tab"><svg><use href="#tree"/></svg></span>
							<span class="tab"><svg><use href="#hist"/></svg></span>
						</div>
					</div>
					<div class="style-main">
						<div class="combo renderer"><svg><use href="#single"/></svg>Single symbol<i class="drop"></i></div>
						<div class="symbol-row">
							<div class="symbol-tree">
								<div class="st-root"><i class="tri-down"></i><span class="fillbox blue"></span><b>Fill</b></div>
								<div class="st-child"><span class="fillbox"></span>Simple fill</div>
							</div>
							<div class="preview"></div>
						</div>
						<div class="btn-row">
							<span class="sq"><svg><use href="#plus"/></svg></span>
							<span class="sq"><svg><use href="#minus"/></svg></span>
							<span class="sq"><svg><use href="#lock"/></svg></span>
							<span class="sq"><svg><use href="#dup"/></svg></span>
							<span class="sq"><svg><use href="#up"/></svg></span>
							<span class="sq"><svg><use href="#down"/></svg></span>
						</div>
						<div class="form-wrap">
							<div class="form">
								<label>Unit</label>
								<div class="combo unit">Millimeter<i class="drop"></i></div>
								<label class="tight-label">Opacity</label>
								<div class="opacity">
									<span class="slider"><i></i></span>
									<span class="spin op-spin"><em>100,0 %</em><span class="updown"><i class="tri-up"></i><i class="tri-down"></i></span></span>
								</div>
								<label>Color</label>
								<div class="colorbtn"><span class="colorface"><i></i></span><span class="colordrop"><i class="tri-down"></i></span></div>
							</div>
							<div class="form-scroll"></div>
						</div>
						<div class="rendering"><i class="tri-right"></i><b>Layer Rendering</b></div>
						<div class="hscroll"><i class="tri-left"></i><span></span><i class="tri-right small"></i></div>
						<div class="bottom-row">
							<span class="sq"><svg><use href="#undoc"/></svg></span>
							<span class="sq"><svg><use href="#redoc"/></svg></span>
							<span class="live"><i class="check on"></i>Live update</span>
							<span class="apply">Apply</span>
						</div>
					</div>
				</div>
			</aside>
		</main>

		<footer class="statusbar">
			<div class="locator"><svg><use href="#glass"/></svg>Type to locate (Ctrl+K)</div>
			<span class="st-ready">Ready</span>
			<span class="st-coord">Coordinate</span>
			<span class="field coord">3.42,1.10</span>
			<svg class="st-mouse"><use href="#mouse"/></svg>
			<span class="st-scale">Scale</span>
			<span class="field scale"><em>1:4625455</em><i class="drop"></i></span>
			<svg class="st-lock"><use href="#padlock"/></svg>
			<span class="st-magn">Magnifier</span>
			<span class="spin magn"><em>100%</em><span class="updown"><i class="tri-up"></i><i class="tri-down"></i></span></span>
			<span class="st-rot">Rotation</span>
			<span class="spin rot"><em>0,0 °</em><span class="updown"><i class="tri-up"></i><i class="tri-down"></i></span></span>
			<i class="check on st-check"></i>
			<span class="st-render">Render</span>
			<svg class="st-globe"><use href="#globe"/></svg>
			<span class="st-epsg">EPSG:4326</span>
			<svg class="st-msg"><use href="#msg"/></svg>
		</footer>
	</div>
</body>
</html>
```

FILE: styles.css
```css
* {
	box-sizing: border-box;
	margin: 0;
	padding: 0;
}

html, body {
	width: 1089px;
	height: 606px;
	overflow: hidden;
}

body {
	background: #f0f0f0;
	color: #111;
	font-family: "Noto Sans", "Open Sans", sans-serif;
	font-size: 12px;
	letter-spacing: -0.25px;
	line-height: 16px;
}

ul {
	list-style: none;
}

i, em {
	font-style: normal;
}

.defs {
	display: block;
	height: 0;
}

.app {
	display: flex;
	flex-direction: column;
	width: 1089px;
	height: 606px;
	overflow: hidden;
}

/* title + menu */
.titlebar {
	display: flex;
	flex: none;
	align-items: center;
	height: 26px;
	padding: 0 0 5px 9px;
	background: #fff;
}

.app-logo {
	width: 16px;
	height: 16px;
}

.app-title {
	margin-left: 5px;
	letter-spacing: -0.35px;
}

.winbtns {
	display: flex;
	margin-left: auto;
	padding-right: 11px;
	gap: 34px;
}

.winbtn {
	width: 12px;
	height: 12px;
}

.menubar {
	display: flex;
	flex: none;
	align-items: center;
	height: 20px;
	padding-left: 11px;
	gap: 12.7px;
	background: #f0f0f0;
	border-bottom: 1px solid #d4d4d4;
}

/* toolbars */
.toolbar {
	display: flex;
	flex: none;
	align-items: center;
	height: 38px;
	background: linear-gradient(#fafafa, #eee);
	border-bottom: 1px solid #c4c4c4;
	overflow: hidden;
}

.toolbar.second {
	height: 40px;
	border-bottom-color: #bdbdbd;
}

.grip {
	flex: none;
	width: 5px;
	height: 20px;
	margin: 0 3px 0 8px;
	background-image: radial-gradient(circle, #aaa 0.8px, transparent 1px);
	background-size: 3px 3px;
}

.grip.first {
	margin-left: 6px;
	margin-right: 3px;
}

.grip.pan {
	margin-right: 4px;
}

.grip.tight {
	margin-right: 0;
}

.grip.wide {
	margin-left: 11px;
	margin-right: 0;
}

.tool {
	display: flex;
	flex: none;
	align-items: center;
	justify-content: center;
	width: 33px;
	height: 32px;
}

.tool.nudge {
	margin-left: 2px;
}

.tool.nudge-sm {
	margin-left: 1px;
}

.tool.active {
	width: 31px;
	background: #dcdcdc;
	border: 1px solid #adadad;
	border-radius: 2px;
}

.tool.off .ic {
	filter: grayscale(1) opacity(0.4);
}

.ic {
	width: 24px;
	height: 24px;
}

.drop {
	flex: none;
	display: block;
	width: 12px;
	height: 5px;
	background: #555;
	clip-path: polygon(20% 0, 80% 0, 50% 100%);
}

.drop.off {
	background: #aaa;
}

.more {
	margin-left: 7px;
	font-size: 14px;
	font-weight: 700;
}

/* main area */
.workspace {
	display: flex;
	flex: 1;
	min-height: 0;
}

.dock.left {
	flex: none;
	width: 295px;
	padding-left: 1px;
}

.dock.right {
	flex: none;
	width: 293px;
	overflow: hidden;
}

.dock-title {
	display: flex;
	align-items: center;
	justify-content: space-between;
	height: 18px;
	padding: 0 2px 0 4px;
}

.dock-title.short {
	height: 16px;
}

.dock-btns {
	display: flex;
	gap: 3px;
}

.dock-btns svg {
	width: 11px;
	height: 11px;
}

.panel-tools {
	display: flex;
	align-items: center;
	height: 22px;
	margin-top: 4px;
	padding-left: 8px;
	gap: 8px;
}

.panel-tools svg {
	width: 17px;
	height: 17px;
}

.panel-tools svg.wider {
	width: 20px;
}

.listbox {
	background: #fff;
	border: 1px solid #a9a9a9;
}

.browser {
	display: flex;
	height: 198px;
	margin-top: 6px;
	overflow: hidden;
}

.tree {
	flex: 1;
	padding-top: 1px;
}

.tree li {
	display: flex;
	align-items: center;
	height: 18px;
}

.tree svg {
	width: 16px;
	height: 16px;
	margin: 0 4px 0 5px;
}

.twisty {
	width: 20px;
}

.twisty.shut {
	height: 8px;
	background: #666;
	clip-path: polygon(40% 0, 65% 50%, 40% 100%);
}

.vscroll {
	display: flex;
	flex-direction: column;
	flex: none;
	width: 14px;
	background: #f0f0f0;
	border-left: 1px solid #e4e4e4;
}

.sb-btn {
	display: flex;
	align-items: center;
	justify-content: center;
	flex: none;
	height: 14px;
	background: #f4f4f4;
}

.sb-thumb {
	flex: none;
	height: 90px;
	background: #fdfdfd;
	border: 1px solid #d8d8d8;
}

.sb-track {
	flex: 1;
	background: #e8e8e8;
}

.tri-up, .tri-down, .tri-right, .tri-left {
	display: block;
	background: #555;
}

.tri-up {
	width: 8px;
	height: 4px;
	clip-path: polygon(50% 0, 100% 100%, 0 100%);
}

.tri-down {
	width: 8px;
	height: 4px;
	clip-path: polygon(0 0, 100% 0, 50% 100%);
}

.tri-right {
	width: 8px;
	height: 12px;
	background: #333;
	clip-path: polygon(0 0, 100% 50%, 0 100%);
}

.tri-left {
	width: 5px;
	height: 8px;
	clip-path: polygon(100% 0, 0 50%, 100% 100%);
}

.h-split {
	display: flex;
	align-items: center;
	justify-content: center;
	height: 8px;
}

.h-split i {
	width: 18px;
	height: 3px;
	background-image: radial-gradient(circle, #bbb 0.8px, transparent 1px);
	background-size: 3px 3px;
}

.layers-tools {
	margin-top: 5px;
	padding-left: 4px;
	gap: 6px;
}

.pressed {
	display: flex;
	align-items: center;
	justify-content: center;
	width: 24px;
	height: 22px;
	background: #dcdcdc;
	border: 1px solid #adadad;
	border-radius: 2px;
}

.eps {
	flex: none;
	width: 10px;
	margin-left: 2px;
	color: #7a4f9a;
	font-family: "Liberation Serif", serif;
	font-size: 17px;
	line-height: 18px;
	letter-spacing: 0;
}

.panel-tools svg.eps-bin {
	width: 10px;
	height: 10px;
	margin: 6px 0 0 -6px;
}

.layers-tools .drop.small {
	width: 9px;
	margin-left: -5px;
}

.layers-tools .gap-left {
	margin-left: 1px;
}

.layers-tools .wide-gap {
	margin-left: 3px;
}

.layers {
	height: 151px;
	margin-top: 5px;
	padding-top: 1px;
}

.layers li {
	display: flex;
	align-items: center;
	height: 18px;
	padding-left: 23px;
}

.layers li.current {
	background: #efefef;
}

.check {
	flex: none;
	display: block;
	width: 14px;
	height: 14px;
	background: #fff;
	border: 1px solid #b5b5b5;
}

.check.on {
	position: relative;
}

/* tick sits over the box */
.check.on::after {
	content: "";
	position: absolute;
	left: 2px;
	top: 1px;
	width: 9px;
	height: 10px;
	background: #111;
	clip-path: polygon(0 55%, 20% 45%, 35% 70%, 85% 0, 100% 0, 40% 100%, 25% 100%);
}

.sym {
	flex: none;
	display: flex;
	align-items: center;
	justify-content: center;
	width: 16px;
	height: 16px;
	margin: 0 6px 0 6px;
}

.sym.swatch {
	background: #87a0ae;
	border: 1px solid #4f6a7c;
}

.line {
	display: block;
	width: 16px;
	height: 1px;
}

.line.brown { background: #a0644a; }
.line.grey { background: #9a9a9a; }
.line.green { background: #9cc48c; }

.dot {
	width: 7px;
	height: 7px;
	border-radius: 50%;
	border: 1px solid #666;
}

.dot.c4 { background: #a06a4e; }
.dot.c3 { background: #d6ae2e; }
.dot.c2 { background: #5e9a5c; }
.dot.c1 { background: #f0a0b4; }

.hidden-layer .name {
	color: #b9b9b9;
	font-style: italic;
}

.v-split {
	display: flex;
	flex: none;
	align-items: center;
	justify-content: center;
	width: 6px;
	padding-bottom: 2px;
}

.v-split i {
	width: 3px;
	height: 18px;
	background-image: radial-gradient(circle, #bbb 0.8px, transparent 1px);
	background-size: 3px 3px;
}

/* map */
.canvas-area {
	display: flex;
	flex-direction: column;
	flex: none;
	width: 489px;
	margin-top: 1px;
	margin-bottom: 1px;
	border: 1px solid #b8b8b8;
	border-top: 0;
	background: #fff;
}

.msgbar {
	display: flex;
	flex: none;
	align-items: center;
	height: 28px;
	padding-left: 9px;
	background: #e4f1fb;
	border-bottom: 1px solid #b5cfe3;
	color: #2a5a9e;
}

.pause {
	display: flex;
	align-items: center;
	justify-content: center;
	gap: 2px;
	width: 25px;
	height: 13px;
	background: #dcdcdc;
	border: 1px solid #444;
	border-radius: 2px;
}

.pause i {
	width: 3px;
	height: 9px;
	background: #222;
}

.msg-bubble {
	width: 20px;
	height: 20px;
	margin-left: 9px;
}

.msg-text {
	margin-left: 12px;
	letter-spacing: -0.2px;
}

.msg-detail {
	font-size: 11px;
	letter-spacing: -0.15px;
}

.msg-close {
	width: 18px;
	height: 18px;
	margin-left: auto;
	margin-right: 20px;
}

.canvas {
	display: block;
	flex: 1;
	min-height: 0;
	width: 100%;
}

/* layer styling */
.dock-title.styling {
	padding-left: 4px;
	padding-right: 0;
	width: 296px;
}

.combo {
	display: flex;
	align-items: center;
	height: 22px;
	background: #f2f2f2;
	border: 1px solid #b4b4b4;
	border-radius: 3px;
	padding-left: 4px;
}

.combo svg {
	width: 16px;
	height: 16px;
	margin-right: 4px;
}

.combo .drop {
	margin-left: auto;
}

.layer-combo {
	width: 300px;
	margin: 5px 0 0 3px;
	padding-right: 15px;
}

.style-body {
	display: flex;
	margin: 8px 0 0 3px;
	width: 300px;
}

.style-tabs {
	flex: none;
	width: 38px;
}

.tab {
	display: flex;
	align-items: center;
	justify-content: center;
	height: 32px;
}

.tab svg {
	width: 24px;
	height: 24px;
}

.tab.current {
	height: 31px;
}

.tab-rail {
	height: 369px;
	padding-top: 0;
	background: #5c5c5c;
}

.style-main {
	flex: none;
	width: 259px;
	margin-left: 3px;
	overflow: hidden;
}

.renderer {
	width: 253px;
	padding-right: 2px;
}

.renderer svg {
	width: 14px;
	height: 14px;
	margin: 0 5px 0 2px;
}

.symbol-row {
	display: flex;
	align-items: center;
	margin-top: 7px;
}

.symbol-tree {
	flex: none;
	width: 152px;
	height: 136px;
	background: #fff;
	border: 1px solid #b4b4b4;
}

.st-root {
	display: flex;
	align-items: center;
	height: 18px;
	padding-left: 6px;
	background: #f0f0f0;
}

.st-child {
	display: flex;
	align-items: center;
	height: 18px;
	padding-left: 43px;
}

.fillbox {
	flex: none;
	width: 16px;
	height: 16px;
	margin-right: 6px;
	background: #bcb094;
	border: 1px solid #6d6652;
}

.fillbox.blue {
	margin-left: 10px;
	margin-right: 7px;
	background: #87a0ae;
	border-color: #4f6a7c;
}

.preview {
	flex: none;
	width: 61px;
	height: 61px;
	margin-left: 26px;
	background: #bcb094;
	border: 1px solid #222;
}

.btn-row {
	display: flex;
	gap: 6px;
	margin-top: 7px;
	padding-bottom: 5px;
	border-bottom: 1px solid #b4b4b4;
	width: 259px;
}

.sq {
	display: flex;
	flex: none;
	align-items: center;
	justify-content: center;
	width: 28px;
	height: 24px;
	background: #f4f4f4;
	border: 1px solid #cfcfcf;
	border-radius: 3px;
}

.sq svg {
	width: 17px;
	height: 17px;
}

.form-wrap {
	display: flex;
	margin-top: 8px;
	margin-left: -1px;
	width: 260px;
	height: 116px;
}

.form {
	display: grid;
	grid-template-columns: 39px 197px;
	grid-auto-rows: 22px;
	row-gap: 0;
	align-items: center;
}

.tight-label {
	letter-spacing: -0.6px;
}

.form-scroll {
	width: 4px;
	margin-left: 9px;
	background: #e8e8e8;
	border: 1px solid #d8d8d8;
}

.unit {
	width: 197px;
	padding-left: 3px;
	padding-right: 6px;
	background: #f2f2f2;
}

.opacity {
	display: flex;
	align-items: center;
	justify-content: space-between;
}

.slider {
	position: relative;
	display: block;
	width: 92px;
	height: 3px;
	background: #1f7fd0;
	outline: 1px solid #7aa8cf;
}

.slider i {
	position: absolute;
	right: 0;
	top: -6px;
	width: 13px;
	height: 14px;
	background: #f7f7f7;
	border: 1px solid #aaa;
	border-radius: 3px;
}

.spin {
	display: flex;
	align-items: center;
	flex: none;
	height: 21px;
	padding-left: 5px;
	background: #fff;
	border: 1px solid #b4b4b4;
	border-radius: 3px;
}

.spin em {
	flex: 1;
}

.updown {
	display: flex;
	flex-direction: column;
	align-items: center;
	justify-content: center;
	gap: 3px;
	width: 14px;
	height: 100%;
	background: #f2f2f2;
	border-left: 1px solid #ccc;
}

.op-spin {
	width: 100px;
}

.colorbtn {
	display: flex;
	height: 22px;
	margin-left: -1px;
}

.colorface {
	flex: none;
	width: 186px;
	padding: 3px 4px;
	background: #f4f4f4;
	border: 1px solid #b4b4b4;
	border-radius: 3px 0 0 3px;
}

.colorface i {
	display: block;
	height: 100%;
	background: #bcb094;
	border-radius: 2px;
}

.colordrop {
	display: flex;
	align-items: center;
	justify-content: center;
	width: 12px;
	background: #f4f4f4;
	border: 1px solid #b4b4b4;
	border-left: 0;
	border-radius: 0 3px 3px 0;
}

.rendering {
	display: flex;
	align-items: center;
	height: 18px;
	margin-top: 12px;
	padding-left: 5px;
	gap: 8px;
	letter-spacing: 0;
}

.hscroll {
	display: flex;
	align-items: center;
	width: 250px;
	height: 14px;
	margin-top: 2px;
	background: #f4f4f4;
	padding-left: 4px;
}

.hscroll span {
	flex: 1;
	height: 14px;
	margin: 0 7px 0 5px;
	background: #f8f8f8;
	border: 1px solid #e0e0e0;
	border-right-color: #ccc;
}

.hscroll .small {
	width: 5px;
	height: 8px;
	margin-right: 4px;
	background: #555;
}

.bottom-row {
	display: flex;
	align-items: center;
	margin-top: 5px;
	gap: 6px;
}

.bottom-row .sq {
	width: 24px;
}

.live {
	display: flex;
	align-items: center;
	gap: 3px;
	margin-left: 24px;
}

.apply {
	display: flex;
	align-items: center;
	justify-content: center;
	flex: none;
	width: 79px;
	height: 21px;
	margin-left: auto;
	margin-right: 9px;
	background: #f4f4f4;
	border: 1px solid #b4b4b4;
	border-radius: 3px;
}

/* status bar */
.statusbar {
	display: flex;
	flex: none;
	align-items: center;
	height: 26px;
	padding: 2px 0 0 5px;
	letter-spacing: -0.45px;
}

.locator {
	display: flex;
	align-items: center;
	flex: none;
	width: 200px;
	height: 22px;
	padding-left: 8px;
	gap: 6px;
	color: #777;
	background: #fff;
	border: 1px solid #b4b4b4;
	border-radius: 3px;
	letter-spacing: -0.25px;
}

.locator svg {
	width: 13px;
	height: 13px;
}

.st-ready {
	flex: none;
	width: 87px;
	margin-left: 7px;
}

.st-coord {
	flex: none;
	width: 57px;
	letter-spacing: -0.7px;
}

.field {
	display: flex;
	align-items: center;
	flex: none;
	height: 21px;
	background: #fff;
	border: 1px solid #b4b4b4;
	border-radius: 3px;
}

.field.coord {
	justify-content: center;
	width: 70px;
	letter-spacing: .5px;
}

.st-mouse {
	flex: none;
	width: 18px;
	height: 18px;
	margin: 0 12px 0 3px;
}

.st-scale { flex: none; width: 30px; }

.field.scale {
	width: 80px;
	padding-left: 3px;
}

.field.scale em {
	flex: 1;
	border-right: 1px solid #ddd;
}

.field.scale .drop {
	width: 20px;
}

.st-lock {
	flex: none;
	width: 14px;
	height: 16px;
	margin: 0 7px 0 10px;
}

.st-magn {
	flex: none;
	width: 47px;
	margin-right: 1px;
	letter-spacing: -0.8px;
}

.spin.magn { width: 87px; }

.st-rot { flex: none; width: 52px; margin-left: 9px; }

.spin.rot { width: 82px; }

.st-check { margin-left: 8px; }

.st-render { flex: none; width: 53px; margin-left: 3px; }

.st-globe {
	flex: none;
	width: 14px;
	height: 14px;
	margin: 0 5px 0 1px;
}

.st-epsg { flex: none; width: 68px; }

.st-msg {
	flex: none;
	width: 18px;
	height: 18px;
	margin-left: 3px;
}
```
